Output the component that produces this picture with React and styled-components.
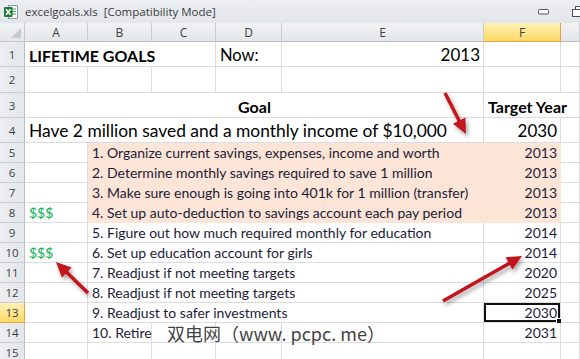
import React from "react";
import styled, { createGlobalStyle, css } from "styled-components";

const COLS = "25px 63px 64px 64px 66px 202px 77px 19px";
const GRID = "#dadcdf";
const PEACH = "#fce4d6";
const TEXT = "#1c1c38";

const GlobalStyle = createGlobalStyle`
  * { box-sizing: border-box; }
  body { margin: 0; overflow: hidden; background: #fff; }
`;

const Window = styled.div`
  position: relative;
  width: 580px;
  height: 359px;
  overflow: hidden;
  background: #fff;
  font-family: Lato, "Liberation Sans", sans-serif;
`;

const TitleBar = styled.div`
  height: 23px;
  display: flex;
  align-items: center;
  gap: 6px;
  padding: 0 0 0 3px;
  background: linear-gradient(#eceef1, #e2e5e9);
  font-family: "Open Sans", "Liberation Sans", sans-serif;
  font-size: 11.5px;
  color: #3a3d42;
`;

const TitleText = styled.span`
  flex: 1;
  white-space: pre;
`;

const WinButtons = styled.div`
  display: flex;
  gap: 23px;
  align-items: center;
  margin-right: -6px;
`;

const Row = styled.div`
  display: grid;
  grid-template-columns: ${COLS};
  height: ${p => p.$h || 20}px;
`;

const highlight = css`
  background: linear-gradient(#fff1b8, #fdd965);
  border-color: #e2a441;
`;

const Corner = styled.div`
  position: relative;
  background: linear-gradient(#f1f2f4, #e3e6ea);
  border-right: 1px solid #c3c8ce;
  border-bottom: 1px solid #c3c8ce;
  &::after {
    content: "";
    position: absolute;
    right: 3px;
    bottom: 3px;
    border-left: 10px solid transparent;
    border-bottom: 10px solid #c7ccd2;
  }
`;

const ColHead = styled.div`
  display: flex;
  align-items: center;
  justify-content: center;
  background: linear-gradient(#f1f2f4, #e3e6ea);
  border-right: 1px solid #c9cdd2;
  border-bottom: 1px solid #b9bec5;
  font-family: "Open Sans", "Liberation Sans", sans-serif;
  font-size: 12px;
  color: #3b3f45;
  ${p => p.$active && highlight}
`;

const RowHead = styled.div`
  display: flex;
  align-items: center;
  justify-content: center;
  background: linear-gradient(90deg, #eceef1, #e3e6ea);
  border-right: 1px solid #b9bec5;
  border-bottom: 1px solid #c9cdd2;
  font-family: "Open Sans", "Liberation Sans", sans-serif;
  font-size: 11.5px;
  color: #3b3f45;
  ${p => p.$active && highlight}
`;

const Cell = styled.div`
  position: relative;
  grid-column: span ${p => p.$span || 1};
  display: flex;
  align-items: flex-end;
  justify-content: ${p =>
    p.$align === "right" ? "flex-end" : p.$align === "center" ? "center" : "flex-start"};
  padding: 0 3px 1px 4px;
  white-space: nowrap;
  background: ${p => p.$fill || "#fff"};
  border-right: 1px solid ${p => p.$fill || GRID};
  border-bottom: 1px solid ${p => p.$fill || GRID};
  font-size: ${p => p.$size || 14}px;
  font-weight: ${p => (p.$bold ? 700 : 400)};
  color: ${p => p.$color || TEXT};
  ${p =>
    p.$selected &&
    css`
      box-shadow: inset 0 0 0 2px #111;
      &::after {
        content: "";
        position: absolute;
        right: -3px;
        bottom: -3px;
        width: 5px;
        height: 5px;
        background: #111;
        border: 1px solid #fff;
      }
    `}
`;

const Money = styled.span`
  color: #00b050;
`;

const Overlay = styled.svg`
  position: absolute;
  left: 0;
  top: 0;
  pointer-events: none;
`;

const Watermark = styled.div`
  position: absolute;
  left: 167px;
  top: 320px;
  font-family: "Noto Sans CJK SC", "Noto Sans", sans-serif;
  font-size: 18px;
  color: #444;
  text-shadow: 0 0 2px #fff, 0 0 2px #fff;
  white-space: pre;
`;

function ExcelIcon() {
  return (
    <svg width="16" height="16" viewBox="0 0 16 16">
      <rect x="5.5" y="1.5" width="9" height="13" fill="#fff" stroke="#8a9aa8" />
      <path d="M8 5h5M8 7.5h5M8 10h5" stroke="#4e9a5a" strokeWidth="1" />
      <rect x="1" y="3" width="8.5" height="10" rx="1" fill="#1f7a3a" />
      <path d="M3 5.2l4.5 5.6M7.5 5.2L3 10.8" stroke="#fff" strokeWidth="1.6" />
    </svg>
  );
}

function WinControls() {
  return (
    <WinButtons>
      <svg width="11" height="6" viewBox="0 0 11 6">
        <rect x="0.5" y="0.5" width="10" height="4.5" rx="1" fill="#fff" stroke="#4b5159" />
      </svg>
      <svg width="14" height="12" viewBox="0 0 14 12">
        <rect x="3.5" y="0.5" width="9" height="7" fill="#fff" stroke="#4b5159" />
        <rect x="0.5" y="3.5" width="9" height="7" fill="#fff" stroke="#4b5159" />
      </svg>
    </WinButtons>
  );
}

function Arrow({ x1, y1, x2, y2 }) {
  const dx = x2 - x1;
  const dy = y2 - y1;
  const len = Math.hypot(dx, dy);
  const ux = dx / len;
  const uy = dy / len;
  const head = 15;
  const half = 7;
  const bx = x2 - ux * head;
  const by = y2 - uy * head;
  const pts = [
    [x2, y2],
    [bx - uy * half, by + ux * half],
    [bx + uy * half, by - ux * half],
  ]
    .map(p => p.join(","))
    .join(" ");
  return (
    <g filter="url(#shadow)">
      <line x1={x1} y1={y1} x2={bx + ux * 2} y2={by + uy * 2} stroke="#c3121c" strokeWidth="3.5" />
      <polygon points={pts} fill="#c3121c" />
    </g>
  );
}

const steps = [
  { n: 5, text: "1. Organize current savings, expenses, income and worth", year: 2013, fill: true },
  { n: 6, text: "2. Determine monthly savings required to save 1 million", year: 2013, fill: true },
  { n: 7, text: "3. Make sure enough is going into 401k for 1 million (transfer)", year: 2013, fill: true },
  { n: 8, text: "4. Set up auto-deduction to savings account each pay period", year: 2013, fill: true, money: true },
  { n: 9, text: "5. Figure out how much required monthly for education", year: 2014 },
  { n: 10, text: "6. Set up education account for girls", year: 2014, money: true },
  { n: 11, text: "7. Readjust if not meeting targets", year: 2020 },
  { n: 12, text: "8. Readjust if not meeting targets", year: 2025 },
  { n: 13, text: "9. Readjust to safer investments", year: 2030, selected: true },
];

export default function App() {
  return (
    <Window>
      <GlobalStyle />
      <TitleBar>
        <ExcelIcon />
        <TitleText>excelgoals.xls  [Compatibility Mode]</TitleText>
        <WinControls />
      </TitleBar>

      <Row $h={19}>
        <Corner />
        {["A", "B", "C", "D", "E", "F"].map(c => (
          <ColHead key={c} $active={c === "F"}>{c}</ColHead>
        ))}
        <ColHead />
      </Row>

      <Row $h={25}>
        <RowHead>1</RowHead>
        <Cell $span={3} $size={16} $bold $color="#000">LIFETIME GOALS</Cell>
        <Cell $size={16.5} $color="#000">Now:</Cell>
        <Cell $size={17} $color="#000" $align="right">2013</Cell>
        <Cell />
        <Cell />
      </Row>

      <Row $h={26}>
        <RowHead>2</RowHead>
        <Cell /><Cell /><Cell /><Cell /><Cell /><Cell /><Cell />
      </Row>

      <Row $h={25}>
        <RowHead>3</RowHead>
        <Cell $span={5} $size={16} $bold $color="#000" $align="center">Goal</Cell>
        <Cell $span={2} $size={16} $bold $color="#000">Target Year</Cell>
      </Row>

      <Row $h={25}>
        <RowHead>4</RowHead>
        <Cell $span={5} $size={17.4} $color="#000">
          Have 2 million saved and a monthly income of $10,000
        </Cell>
        <Cell $size={17} $color="#000" $align="right">2030</Cell>
        <Cell />
      </Row>

      {steps.map(s => (
        <Row key={s.n}>
          <RowHead $active={s.selected}>{s.n}</RowHead>
          <Cell>{s.money && <Money>$$$</Money>}</Cell>
          <Cell $span={4} $fill={s.fill ? PEACH : undefined}>{s.text}</Cell>
          <Cell $fill={s.fill ? PEACH : undefined} $align="right" $selected={s.selected}>
            {s.year}
          </Cell>
          <Cell />
        </Row>
      ))}

      <Row>
        <RowHead>14</RowHead>
        <Cell />
        <Cell>10. Retire</Cell>
        <Cell /><Cell /><Cell />
        <Cell $align="right">2031</Cell>
        <Cell />
      </Row>

      <Row>
        <RowHead>15</RowHead>
        <Cell /><Cell /><Cell /><Cell /><Cell /><Cell /><Cell />
      </Row>

      <Overlay width="580" height="359">
        <defs>
          <filter id="shadow" x="-20%" y="-20%" width="140%" height="140%">
            <feDropShadow dx="2" dy="3" stdDeviation="2" floodColor="#000" floodOpacity="0.35" />
          </filter>
        </defs>
        <Arrow x1={445} y1={93} x2={466} y2={134} />
        <Arrow x1={443} y1={301} x2={522} y2={256} />
        <Arrow x1={88} y1={293} x2={56} y2={262} />
      </Overlay>

      <Watermark>双电网（www. pcpc. me）</Watermark>
    </Window>
  );
}
